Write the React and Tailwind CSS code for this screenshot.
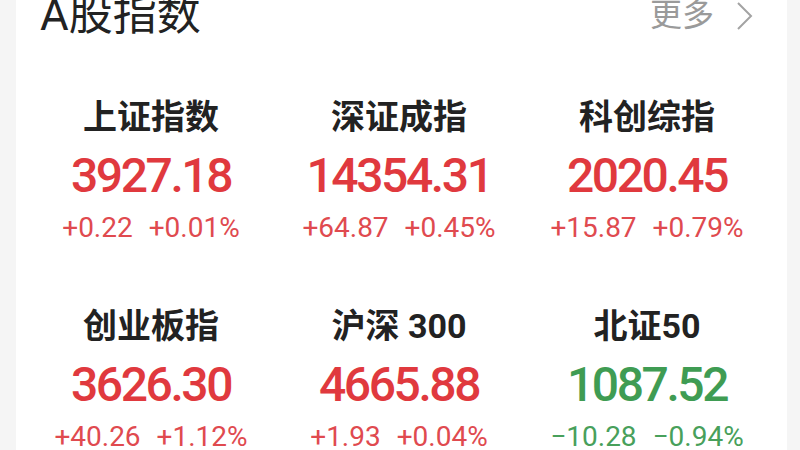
import React from 'react'

const indices = [
  { name: '上证指数', price: '3927.18', change: '+0.22', pct: '+0.01%', up: true },
  { name: '深证成指', price: '14354.31', change: '+64.87', pct: '+0.45%', up: true },
  { name: '科创综指', price: '2020.45', change: '+15.87', pct: '+0.79%', up: true },
  { name: '创业板指', price: '3626.30', change: '+40.26', pct: '+1.12%', up: true },
  { name: '沪深 300', price: '4665.88', change: '+1.93', pct: '+0.04%', up: true },
  { name: '北证50', price: '1087.52', change: '−10.28', pct: '−0.94%', up: false }
]

function IndexCell({ item }) {
  return (
    <div className="flex flex-col items-center">
      <div className="text-[34px] leading-[40px] font-bold text-[#222222] whitespace-nowrap">
        {item.name}
      </div>
      <div
        className={`text-[48px] leading-[77px] font-medium tracking-[-2.4px] ${
          item.up ? 'text-[#e0393e]' : 'text-[#3f9c53]'
        }`}
      >
        {item.price}
      </div>
      <div
        className={`flex gap-[16px] text-[28px] leading-[28px] ${
          item.up ? 'text-[#e04a4f]' : 'text-[#48a05b]'
        }`}
      >
        <span>{item.change}</span>
        <span>{item.pct}</span>
      </div>
    </div>
  )
}

export default function App() {
  return (
    <div
      className="flex h-[450px] w-[800px] overflow-hidden bg-[#f5f5f5]"
      style={{ fontFamily: 'Roboto, "Noto Sans CJK SC", sans-serif' }}
    >
      <div className="ml-[16px] w-[771px] bg-white">
        {/* header */}
        <div className="flex h-[29px] items-center justify-between pl-[24px] pr-[33px]">
          <h2 className="text-[44px] leading-none font-normal text-[#222222]">A股指数</h2>
          <div className="flex items-center text-[#9a9a9a]">
            <span className="text-[32px] leading-none">更多</span>
            <svg className="ml-[22px] mt-[3px]" width="18" height="30" viewBox="0 0 18 30" fill="none">
              <polyline points="2,2 15,15 2,28" stroke="#a3a3a3" strokeWidth="2" />
            </svg>
          </div>
        </div>

        {/* grid */}
        <div className="mt-[68px] grid grid-cols-3 gap-y-[64px] pl-[11px] pr-[16px]">
          {indices.map((item) => (
            <IndexCell key={item.name} item={item} />
          ))}
        </div>
      </div>
    </div>
  )
}
